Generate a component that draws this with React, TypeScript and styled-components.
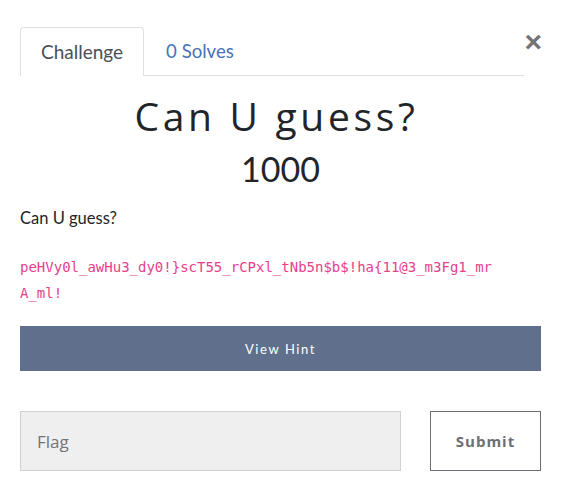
import React from 'react';
import styled, { createGlobalStyle } from 'styled-components';

const GlobalStyle = createGlobalStyle`
    body {
        margin: 0;
        background: #fff;
        font-family: Lato, 'Open Sans', sans-serif;
        color: #212529;
    }
`;

const Modal = styled.div`
    position: relative;
    width: 567px;
    height: 490px;
    box-sizing: border-box;
    padding: 27px 26px 0 20px;
`;

const CloseButton = styled.button`
    position: absolute;
    top: 27px;
    right: 25px;
    border: none;
    background: none;
    padding: 0;
    font-family: Arial, 'Liberation Sans', sans-serif;
    font-size: 30px;
    font-weight: 700;
    line-height: 1;
    color: #737373;
    cursor: pointer;
`;

const Tabs = styled.div`
    display: flex;
    width: 504px;
    height: 49px;
    box-sizing: border-box;
    border-bottom: 1px solid #dee2e6;
`;

const Tab = styled.div<{ active?: boolean }>`
    display: flex;
    align-items: center;
    box-sizing: border-box;
    height: ${(p) => (p.active ? '49px' : '48px')};
    padding: 0 ${(p) => (p.active ? '20px' : '21px')} 1px;
    font-size: ${(p) => (p.active ? '19px' : '18.6px')};
    color: ${(p) => (p.active ? '#495057' : '#4773b8')};
    background: ${(p) => (p.active ? '#fff' : 'transparent')};
    border: 1px solid ${(p) => (p.active ? '#dee2e6' : 'transparent')};
    border-bottom: none;
    border-radius: 4px 4px 0 0;
`;

const Title = styled.h2`
    margin: 14px 8px 0 0;
    text-align: center;
    font-family: 'Open Sans', sans-serif;
    font-weight: 400;
    font-size: 39px;
    letter-spacing: 3.7px;
    line-height: 52px;
`;

const Value = styled.h3`
    margin: 0;
    text-align: center;
    font-weight: 400;
    font-size: 34px;
    line-height: 54px;
`;

const Description = styled.p`
    margin: 8px 0 0;
    font-size: 16.5px;
    line-height: 28px;
`;

const Code = styled.code`
    display: block;
    margin-top: 22px;
    max-width: 478px;
    word-break: break-all;
    font-family: 'DejaVu Sans Mono', monospace;
    font-size: 14px;
    line-height: 26px;
    color: #e83e8c;
`;

const HintButton = styled.button`
    display: block;
    width: 100%;
    height: 45px;
    margin-top: 20px;
    border: none;
    background: #5f6f8c;
    color: #fff;
    font-family: Lato, sans-serif;
    font-size: 13px;
    letter-spacing: 1.6px;
`;

const FlagRow = styled.div`
    display: flex;
    gap: 29px;
    margin-top: 40px;
`;

const FlagInput = styled.input`
    flex: 1;
    height: 60px;
    box-sizing: border-box;
    padding: 0 16px;
    border: 1px solid #d1d1d1;
    background: #efefef;
    font-family: 'Open Sans', sans-serif;
    font-size: 17px;
    color: #495057;
    &::placeholder {
        color: #70757c;
    }
`;

const SubmitButton = styled.button`
    width: 111px;
    height: 60px;
    box-sizing: border-box;
    border: 1px solid #6c6f76;
    background: #fff;
    color: #6c6f76;
    font-family: 'Open Sans', sans-serif;
    font-weight: 700;
    font-size: 15px;
    letter-spacing: 1px;
`;

export default function App() {
    return (
        <>
            <GlobalStyle />
            <Modal>
                <CloseButton>×</CloseButton>
                <Tabs>
                    <Tab active>Challenge</Tab>
                    <Tab>0 Solves</Tab>
                </Tabs>
                <Title>Can U guess?</Title>
                <Value>1000</Value>
                <Description>Can U guess?</Description>
                <Code>peHVy0l_awHu3_dy0!{'}'}scT55_rCPxl_tNb5n$b$!ha{'{'}11@3_m3Fg1_mrA_ml!</Code>
                <HintButton>View Hint</HintButton>
                <FlagRow>
                    <FlagInput placeholder="Flag" />
                    <SubmitButton>Submit</SubmitButton>
                </FlagRow>
            </Modal>
        </>
    );
}
